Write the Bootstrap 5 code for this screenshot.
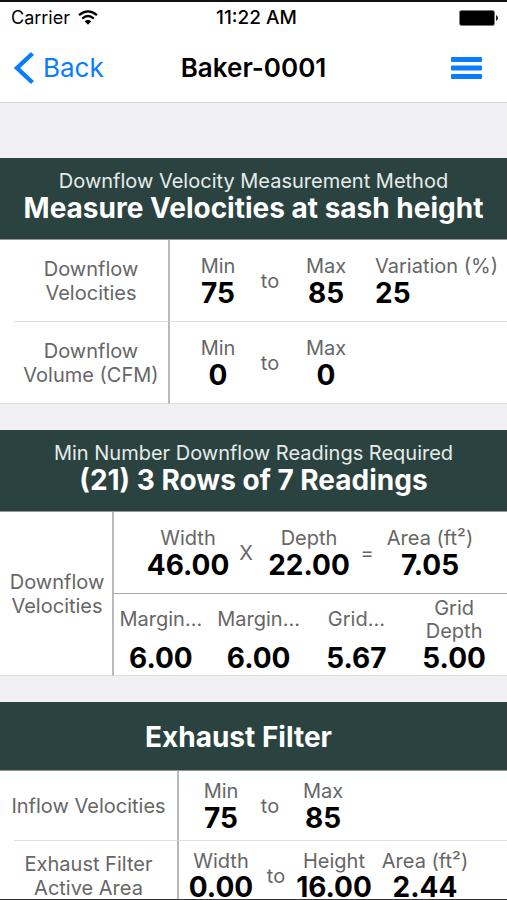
<!DOCTYPE html>
<html lang="en">
<head>
<meta charset="utf-8">
<meta name="viewport" content="width=device-width, initial-scale=1">
<title>Baker-0001</title>
<link rel="stylesheet" href="https://cdn.jsdelivr.net/npm/bootstrap@5.3.0/dist/css/bootstrap.min.css">
<style>
body { font-family: Inter, "Liberation Sans", sans-serif; font-size: 20px; line-height: 24px; color: #666; background: #efeff4; }
.screen { height: 100vh; border-top: 2px solid #111; border-bottom: 1px solid #333; }
.status-bar, .title-bar { display: grid; grid-template-columns: 1fr auto 1fr; align-items: center; color: #000; }
.status-bar { height: 32px; padding: 0 9px 0 11px; font-size: 18px; }
.clock { font-size: 19px; font-weight: 500; padding-left: 4px; }
.title-bar { height: 69px; padding: 0 13px; font-size: 26px; line-height: 32px; border-bottom: 1px solid #d4d4d8; }
.title-bar h1 { font-size: 26px; line-height: 32px; }
.back-link, .menu-button { color: #087dff; }
.menu-button { margin-right: 12px; }
.sections { display: flex; flex-direction: column; gap: 26px; padding-top: 55px; }
.section-head { background: #2b4340; color: #fff; padding: 11px 8px 16px; text-align: center; border-bottom: 1px solid #8d9896; }
.section-head p { color: #e6ecea; }
.section-head h2 { font-size: 28px; line-height: 30px; font-weight: 700; }
.section-head.single { padding: 20px 38px 18px 8px; }
.panel { background: #fff; }
.entry { display: grid; min-height: 82px; }
.entry > .name, .entry > .readings { border-bottom: 1px solid #dfdfe2; }
.entry > .name { display: flex; align-items: center; justify-content: center; text-align: center; margin-left: 14px; }
.panel > .entry:last-child > .name { margin-left: 0; padding-left: 14px; }
.readings { display: grid; align-items: center; text-align: center; border-left: 2px solid #b9b9bc; white-space: nowrap; }
.velocity .entry { grid-template-columns: 168fr 339fr; }
.velocity .readings { grid-template-columns: 11fr 74fr 30fr 82fr 8fr 132fr; }
.exhaust .entry { grid-template-columns: 177fr 330fr; min-height: 70px; }
.exhaust .entry > .name { margin-left: 0; padding: 0; background: linear-gradient(#dfdfe2, #dfdfe2) bottom right / calc(100% - 14px) 1px no-repeat; border: 0; }
.panel.exhaust > .entry:last-child > .name { padding: 0; }
.exhaust .readings { grid-template-columns: 4fr 76fr 22fr 84fr 142fr; }
.exhaust .readings.area { grid-template-columns: 4fr 76fr 34fr 82fr 100fr 32fr; }
.grid-size .entry { grid-template-columns: 112fr 395fr; }
.panel.grid-size > .entry > .name { padding: 0 0 0 2px; }
.size-line { display: grid; grid-template-columns: 34fr 80fr 36fr 90fr 26fr 100fr 27fr; align-items: center; height: 82px; border-bottom: 1px solid #a9a9ac; }
.margin-line { display: grid; grid-template-columns: repeat(4, 1fr); align-items: center; height: 81px; padding-right: 4px; margin-left: -2px; }
.margin-line dt { min-height: 46px; line-height: 23px; display: flex; align-items: center; justify-content: center; white-space: normal; }
dl.reading { margin: 0; display: flex; flex-direction: column; align-items: center; min-width: 0; }
dl.reading.left { align-items: flex-start; }
.reading dt { font-weight: 400; }
.reading dd { margin: 0; font-size: 28px; line-height: 30px; font-weight: 700; color: #000; }
.area .reading { align-self: start; padding-top: 8px; }
.area .reading dd { line-height: 22px; margin-top: 3px; }
</style>
</head>
<body>
<div class="screen overflow-hidden">
  <header class="bg-white">
    <div class="status-bar">
      <div class="d-flex align-items-center gap-2">
        <span>Carrier</span>
        <svg width="20" height="16" viewBox="0 0 20 16" fill="none" stroke="#000" stroke-width="2.2" aria-hidden="true"><path d="M1 5.2Q10-2.6 19 5.2M4.2 8.6Q10 3.4 15.8 8.6"/><path d="M6.6 11.2Q10 8.200 13.400 11.200L10 14.800Z" fill="#000" stroke="none"/></svg>
      </div>
      <div class="clock">11:22 AM</div>
      <svg class="ms-auto" width="39" height="16" viewBox="0 0 39 16" aria-hidden="true"><rect x=".5" y=".5" width="35" height="15" rx="2" fill="#000" stroke="#777"/><path d="M37 5q2 1 2 3t-2 3z" fill="#222"/></svg>
    </div>
    <nav class="title-bar" aria-label="Main">
      <a class="back-link d-flex align-items-center gap-2 text-decoration-none" href="#back">
        <svg width="22" height="34" viewBox="0 0 22 34" fill="none" stroke="currentColor" stroke-width="4.400" aria-hidden="true"><path d="M19.500 2.500L4 17L19.500 31.500"/></svg>
        <span>Back</span>
      </a>
      <h1 class="m-0 fw-semibold">Baker-0001</h1>
      <button type="button" class="menu-button btn border-0 p-0 ms-auto d-flex" aria-label="Menu">
        <svg width="31" height="22" viewBox="0 0 31 22" fill="currentColor" aria-hidden="true"><rect width="31" height="5" rx="1"/><rect y="8.500" width="31" height="5" rx="1"/><rect y="17" width="31" height="5" rx="1"/></svg>
      </button>
    </nav>
  </header>

  <main class="sections">
    <section class="panel velocity">
      <div class="section-head"><p class="m-0">Downflow Velocity Measurement Method</p><h2 class="m-0">Measure Velocities at sash height</h2></div>
      <div class="entry">
        <div class="name">Downflow<br>Velocities</div>
        <div class="readings">
          <span></span>
          <dl class="reading"><dt>Min</dt><dd>75</dd></dl>
          <span>to</span>
          <dl class="reading"><dt>Max</dt><dd>85</dd></dl>
          <span></span>
          <dl class="reading left"><dt>Variation (%)</dt><dd>25</dd></dl>
        </div>
      </div>
      <div class="entry">
        <div class="name">Downflow<br>Volume (CFM)</div>
        <div class="readings">
          <span></span>
          <dl class="reading"><dt>Min</dt><dd>0</dd></dl>
          <span>to</span>
          <dl class="reading"><dt>Max</dt><dd>0</dd></dl>
        </div>
      </div>
    </section>

    <section class="panel grid-size">
      <div class="section-head"><p class="m-0">Min Number Downflow Readings Required</p><h2 class="m-0">(21) 3 Rows of 7 Readings</h2></div>
      <div class="entry">
        <div class="name">Downflow<br>Velocities</div>
        <div class="readings">
          <div class="size-line">
            <span></span>
            <dl class="reading"><dt>Width</dt><dd>46.00</dd></dl>
            <span>X</span>
            <dl class="reading"><dt>Depth</dt><dd>22.00</dd></dl>
            <span>=</span>
            <dl class="reading"><dt>Area (ft²)</dt><dd>7.05</dd></dl>
          </div>
          <div class="margin-line">
            <dl class="reading"><dt>Margin...</dt><dd>6.00</dd></dl>
            <dl class="reading"><dt>Margin...</dt><dd>6.00</dd></dl>
            <dl class="reading"><dt>Grid...</dt><dd>5.67</dd></dl>
            <dl class="reading"><dt>Grid<br>Depth</dt><dd>5.00</dd></dl>
          </div>
        </div>
      </div>
    </section>

    <section class="panel exhaust">
      <div class="section-head single"><h2 class="m-0">Exhaust Filter</h2></div>
      <div class="entry">
        <div class="name">Inflow Velocities</div>
        <div class="readings">
          <span></span>
          <dl class="reading"><dt>Min</dt><dd>75</dd></dl>
          <span>to</span>
          <dl class="reading"><dt>Max</dt><dd>85</dd></dl>
        </div>
      </div>
      <div class="entry">
        <div class="name">Exhaust Filter<br>Active Area</div>
        <div class="readings area">
          <span></span>
          <dl class="reading"><dt>Width</dt><dd>0.00</dd></dl>
          <span>to</span>
          <dl class="reading"><dt>Height</dt><dd>16.00</dd></dl>
          <dl class="reading"><dt>Area (ft²)</dt><dd>2.44</dd></dl>
        </div>
      </div>
    </section>
  </main>
</div>
<script src="https://cdn.jsdelivr.net/npm/bootstrap@5.3.0/dist/js/bootstrap.bundle.min.js"></script>
</body>
</html>
